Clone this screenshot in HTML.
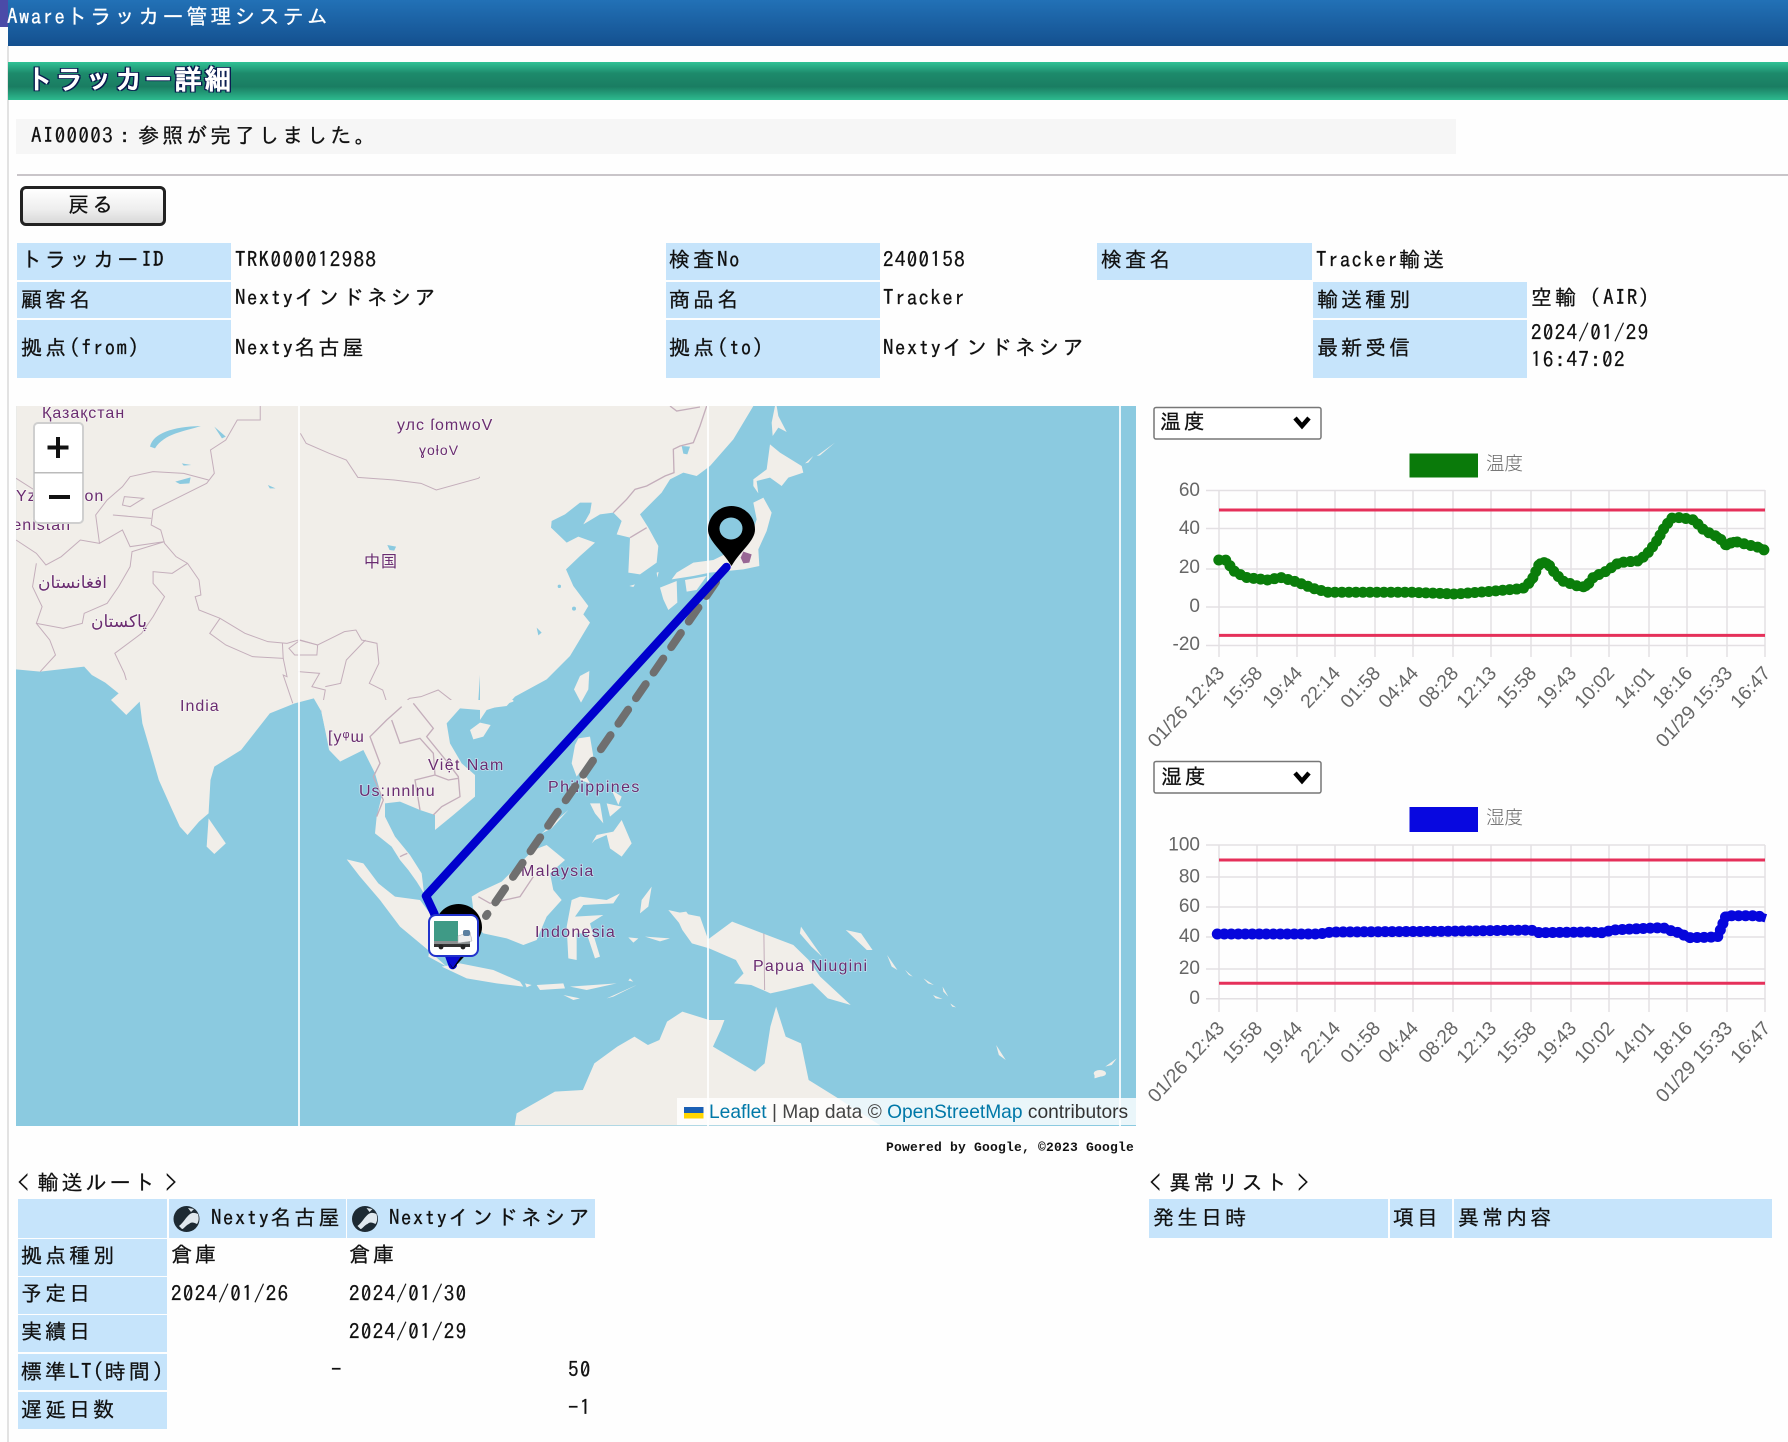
<!DOCTYPE html>
<html lang="ja"><head><meta charset="utf-8"><title>トラッカー詳細</title>
<style>
html,body{margin:0;padding:0;background:#fefefe}
#p{position:relative;width:1788px;height:1442px;overflow:hidden;background:#fefefe;font-family:"IPAGothic","Noto Sans CJK JP",monospace;color:#111}
#p>div{position:absolute}
.t{font-size:21px;letter-spacing:3.05px;line-height:24px;height:24px;white-space:nowrap;-webkit-text-stroke:.25px currentColor}
.t i{font-style:normal;letter-spacing:1.35px}
.t b{font-weight:normal;letter-spacing:9px}
.b{background:#c6e4fb}
svg{position:absolute;left:0;top:0}
svg text{font-family:"Liberation Sans",sans-serif}
.ml text{paint-order:stroke;stroke:#fff;stroke-opacity:.45;stroke-width:1.5px}
</style></head><body><div id="p">
<div style="left:7px;top:46px;width:2px;height:1396px;background:#e2e2e2"></div>
<div style="left:8px;top:0;width:1780px;height:46px;background:linear-gradient(#2271b6,#14508f)"></div>
<div style="left:0;top:0;width:8px;height:27px;background:#4b4ba8"></div>
<div class="t" style="left:7px;top:5px;color:#fff"><i>Aware</i>トラッカー管理システム</div>
<div style="left:8px;top:62px;width:1780px;height:38px;background:linear-gradient(#30c296,#1d8a6b 30%,#1a7d62 65%,#2dba8f)"></div>
<div class="t" style="left:26px;top:65px;height:30px;line-height:30px;font-size:27px;letter-spacing:2.7px;color:#fff;font-weight:bold;text-shadow:-1.5px -1px 0 #0a1c50,1.5px -1px 0 #0a1c50,-1.5px 1px 0 #0a1c50,1.5px 1px 0 #0a1c50">トラッカー詳細</div>
<div style="left:16px;top:119px;width:1440px;height:35px;background:#f6f6f6"></div>
<div class="t" style="left:31px;top:124px"><i>AI00003</i>：参照が完了しました。</div>
<div style="left:17px;top:174px;width:1771px;height:2px;background:#c9c5c9"></div>
<div style="left:20px;top:186px;width:140px;height:34px;border:3px solid #222;border-radius:6px;background:linear-gradient(#fff,#eee 60%,#d8d8d8)"></div>
<div class="t" style="left:68px;top:193px">戻る</div>

<div class="b" style="left:17px;top:243px;width:214px;height:37px"></div>
<div class="b" style="left:17px;top:282px;width:214px;height:36px"></div>
<div class="b" style="left:17px;top:320px;width:214px;height:58px"></div>
<div class="b" style="left:666px;top:243px;width:214px;height:37px"></div>
<div class="b" style="left:666px;top:282px;width:214px;height:36px"></div>
<div class="b" style="left:666px;top:320px;width:214px;height:58px"></div>
<div class="b" style="left:1097px;top:243px;width:215px;height:37px"></div>
<div class="b" style="left:1313px;top:282px;width:214px;height:36px"></div>
<div class="b" style="left:1313px;top:320px;width:214px;height:58px"></div>

<div class="t" style="left:21px;top:248px">トラッカー<i>ID</i></div>
<div class="t" style="left:235px;top:248px"><i>TRK000012988</i></div>
<div class="t" style="left:669px;top:248px">検査<i>No</i></div>
<div class="t" style="left:883px;top:248px"><i>2400158</i></div>
<div class="t" style="left:1101px;top:248px">検査名</div>
<div class="t" style="left:1316px;top:248px"><i>Tracker</i>輸送</div>
<div class="t" style="left:21px;top:288px">顧客名</div>
<div class="t" style="left:235px;top:286px"><i>Nexty</i>インドネシア</div>
<div class="t" style="left:669px;top:288px">商品名</div>
<div class="t" style="left:883px;top:286px"><i>Tracker</i></div>
<div class="t" style="left:1317px;top:288px">輸送種別</div>
<div class="t" style="left:1531px;top:286px">空輸（<i>AIR</i>）</div>
<div class="t" style="left:21px;top:336px">拠点<i>(from)</i></div>
<div class="t" style="left:235px;top:336px"><i>Nexty</i>名古屋</div>
<div class="t" style="left:669px;top:336px">拠点<i>(to)</i></div>
<div class="t" style="left:883px;top:336px"><i>Nexty</i>インドネシア</div>
<div class="t" style="left:1317px;top:336px">最新受信</div>
<div class="t" style="left:1531px;top:321px"><i>2024/01/29</i></div>
<div class="t" style="left:1531px;top:348px"><i>16:47:02</i></div>

<svg width="1788" height="1442" viewBox="0 0 1788 1442">
<defs><clipPath id="mc"><rect x="16" y="406" width="1120" height="720"/></clipPath></defs>
<g clip-path="url(#mc)">
<rect x="16" y="406" width="1120" height="720" fill="#8bcae0"/>
<g transform="translate(0,400) scale(.3827,.33333)">
<g fill="#f1eee9">
<path d="M42 18L42 808 105 815 220 800 240 825 275 848 310 880 290 900 330 945 365 905 372 970 395 1060 415 1140 450 1230 470 1280 490 1305 520 1265 545 1240 550 1140 560 1100 630 1050 705 940 770 910 820 895 840 935 860 1050 885 1080 950 1000 1250 900 1300 18Z"/>
<path d="M545 1255L590 1330 560 1362 540 1340Z"/>
<path d="M1763 1540L1793 1535 1848 1620 1913 1565 1993 1600 2073 1635 2113 1680 2143 1730 2223 1815 2163 1795 2123 1750 2053 1770 2013 1780 1963 1755 1918 1750 1943 1720 1923 1680 1853 1645 1808 1630 1783 1590Z"/>
<path d="M2210 1590L2250 1600 2280 1650 2265 1650ZM2318 1665L2345 1710 2330 1700ZM2365 1710L2385 1730 2375 1725ZM2413 1735L2440 1755 2425 1750ZM2463 1760L2478 1790 2465 1775ZM2438 1785L2463 1797 2445 1795ZM2483 1810L2498 1822 2488 1820ZM2603 1935L2628 1980 2610 1965ZM2860 2020L2875 2030 2860 2035ZM2888 2000L2918 1975 2905 1995Z"/>
<path d="M1345 2176L1350 2140 1450 2075 1523 2070 1553 1990 1613 1940 1658 1910 1693 1935 1723 1920 1743 1865 1783 1835 1853 1860 1893 1860 1883 1890 1863 1940 1973 2015 1998 1990 2013 1880 2028 1820 2053 1910 2093 1930 2113 2040 2183 2090 2300 2176Z"/>
<ellipse cx="2874" cy="2020" rx="16" ry="10"/>
<path d="M2093 1580L2148 1670 2120 1640 2090 1600Z"/>
</g>
<g fill="#8bcae0">
<path d="M392 140C400 100 450 80 525 78C480 95 430 100 405 145Z"/>
<path d="M458 245L498 232 495 250 470 252Z"/>
<path d="M1012 435L1035 440 1030 452 1018 450Z"/>
<path d="M560 80L590 110 580 115ZM475 190L500 195 480 197ZM700 255L720 265 705 265ZM1785 135L1805 135 1795 165Z"/>
</g>
<g fill="none" stroke="#c4aebb">
<path vector-effect="non-scaling-stroke" d="M785 100L800 130 860 160 905 180 935 232 1030 240 1100 250 1140 270 1250 235 1295 190 1300 150 1370 125 1430 80 1490 70 1450 30 1390 35 1390 18"/>
<path vector-effect="non-scaling-stroke" d="M680 18L680 60 620 60 590 120 550 150 560 220 540 250 470 290 400 330 395 375 420 390 430 430 460 470 490 490 520 540 525 585 510 590 520 630 575 655 640 700 700 725 750 730 780 720 830 735 900 695 930 690 945 720 985 730 990 790 965 850 1000 870 1010 905 1040 925 1070 895 1100 890 1145 870 1190 910"/>
<path vector-effect="non-scaling-stroke" d="M42 235L90 270M400 215L340 230 320 260 280 300 250 345 260 430 210 420 160 470 120 495 95 460 42 420M400 215L480 220 545 240M295 345L395 355M325 290L375 295 340 320 320 315Z"/>
<path vector-effect="non-scaling-stroke" d="M260 430L320 390 340 440 430 425 345 455 340 500 310 560 280 610 220 640 215 670 165 685 95 670 110 620 85 560 95 490M95 670L130 720 145 765 105 815"/>
<path vector-effect="non-scaling-stroke" d="M490 490L450 520 400 515 400 550 430 590 400 650 370 700 300 760 325 820 330 840"/>
<path vector-effect="non-scaling-stroke" d="M575 655L548 700 590 735 660 770 740 775 738 730M755 745L785 720 830 735 828 765 770 765Z"/>
<path vector-effect="non-scaling-stroke" d="M740 775L750 830 740 825 765 910M780 815L835 820 815 860 850 870 840 935M955 720L905 780 890 850 850 860"/>
<path vector-effect="non-scaling-stroke" d="M1996 1600L1998 1770"/>
</g>
</g>
<!-- east asia, true 3x crop coords -->
<g transform="translate(480,406) scale(.33333)">
<g fill="#f1eee9">
<path d="M0 0L0 910 80 900 105 872 200 820 270 750 330 650 310 625 325 600 280 540 258 490 300 450 345 410 295 392 260 410 213 365 215 345 255 325 300 290 335 290 330 320 310 355 360 325 400 320 425 345 410 385 450 395 445 500 480 505 530 470 535 420 505 365 480 325 545 260 570 220 610 200 650 210 690 180 760 100 820 0Z"/>
<path d="M300 810L328 795 325 850 303 890 282 850Z"/>
<path d="M820 290L850 275 875 320 860 375 835 430 838 480 790 490 740 495 690 500 640 510 575 520 590 500 640 470 700 462 745 440 810 400 830 340Z"/>
<path d="M615 522L680 510 650 552 620 557Z"/>
<path d="M540 545L590 525 592 590 565 612 550 580Z"/>
<path d="M870 115L900 140 965 180 970 200 925 215 905 240 870 215 830 225 835 262 820 240 820 220 860 190Z"/>
<path d="M885 0L875 50 878 90 895 65 920 78 895 30 890 0Z"/>
<path d="M975 172L1000 150 985 170ZM1010 150L1065 110 1020 148Z"/>
<path d="M448 540L465 535 460 543ZM530 500L536 498 532 515Z"/>
</g>
<g fill="#8bcae0">
<path d="M605 120L630 122 622 145 610 143Z"/>
<circle cx="238" cy="541" r="5"/><circle cx="282" cy="608" r="6"/><path d="M170 665L185 680 175 688Z"/>
</g>
<g fill="none" stroke="#c4aebb" stroke-width="4">
<path d="M680 0L660 60 640 110 600 120 580 130 582 200 555 210 500 240 465 250 440 280 400 320M450 395L500 365M570 0L590 15 660 3"/>
</g>
<path d="M790 437L815 445 808 470 790 472 782 455Z" fill="#7a3a78" opacity=".75"/>
</g>
<!-- southeast asia, true 3x crop coords -->
<g transform="translate(320,700) scale(.33333)">
<g fill="#f1eee9">
<path d="M0 0L5 40 25 130 60 185 130 150 165 220 185 290 170 350 165 400 215 440 240 480 265 510 290 545 312 580 305 520 270 465 225 410 195 350 195 310 240 305 300 330 345 345 345 390 400 345 465 290 465 225 425 190 390 130 380 70 420 25 480 30 480 60 500 30 580 5 580 0Z"/>
<path d="M450 90L480 68 512 75 490 110 460 118Z"/>
<path d="M775 115L810 110 820 170 800 190 770 230 755 190 765 135ZM790 215L810 250 780 240Z"/>
<path d="M815 430L830 405 880 395 905 360 935 430 905 470 870 445 860 405 825 420Z"/>
<path d="M810 310L840 310 850 370 825 340ZM860 310L905 320 870 350ZM875 270L905 290 895 315Z"/>
<path d="M665 400L745 330 695 385Z"/>
<path d="M80 478L130 490 175 550 225 590 300 600 345 660 325 770 380 800 330 755 240 680 180 600 120 530Z"/>
<path d="M365 800L420 790 520 810 600 845 610 860 530 850 440 835Z"/>
<path d="M615 850L635 855 620 862ZM650 855L730 850 735 865 660 870ZM750 860L890 850 800 870ZM930 835L940 845 925 842ZM860 895L950 855 880 890ZM730 885L780 895 760 900Z"/>
<path d="M455 590L480 575 545 545 590 500 640 450 680 435 735 480 690 520 700 570 725 600 680 650 650 720 610 735 560 715 490 700 470 680 460 630Z"/>
<path d="M755 600L780 590 860 600 900 580 880 610 790 615 765 650 850 645 810 670 840 770 825 775 800 700 770 700 770 780 745 775 740 680Z"/>
<path d="M965 600L995 560 985 620 960 640Z"/>
<path d="M925 712L955 715 940 728ZM975 710L1050 715 1020 724Z"/>
<path d="M1045 630L1090 640 1140 650 1165 720 1180 740 1120 700 1095 690Z"/>
</g>
<g fill="none" stroke="#c4aebb" stroke-width="4">
<path d="M245 20L200 60 150 110 180 190 160 230 190 300 170 350M280 10L340 85 320 110 385 190 415 230 420 290 365 320 340 345M215 60L240 130 300 115 340 160 345 225 385 240 415 235M345 225L285 240 300 330M240 470L250 465 262 460M475 590L510 610 600 590 640 530"/>
</g>
</g>
<g fill="#fff" opacity=".85"><rect x="298" y="406" width="2" height="720"/><rect x="707" y="406" width="2" height="720"/><rect x="1119" y="406" width="2" height="720"/></g>
<g class="ml" fill="#6a2c70" font-size="16" letter-spacing="1">
<text x="42" y="418">Қазақстан</text>
<text x="16" y="501">Yzbekiston</text>
<text x="71" y="530" text-anchor="end">Türkmenistan</text>
<text x="38" y="588" font-size="17">افغانستان</text>
<text x="91" y="627" font-size="17">پاکستان</text>
<text x="397" y="430">улс ſomwoV</text>
<text x="419" y="455" font-size="14">ɣoƚoV</text>
<text x="364" y="567" font-size="16" style="font-family:'Noto Sans CJK SC',sans-serif">中国</text>
<text x="180" y="711">India</text>
<text x="328" y="742">[yᵠɯ</text>
<text x="428" y="770" letter-spacing="1.4">Việt Nam</text>
<text x="359" y="796">Us:ınnlnu</text>
<text x="548" y="792" letter-spacing="1.4">Philippines</text>
<text x="521" y="876" letter-spacing="1.3">Malaysia</text>
<text x="535" y="937" letter-spacing="1.3">Indonesia</text>
<text x="753" y="971" letter-spacing="1.2">Papua Niugini</text>
</g>
<path d="M716 582L486 916" fill="none" stroke="#6f6f6f" stroke-width="8" stroke-linecap="round" stroke-dasharray="17 14"/>
<path d="M726.500 567L426 896 434 913 452.700 965" fill="none" stroke="#0000cd" stroke-width="8.500" stroke-linejoin="round" stroke-linecap="round"/>
<path fill-rule="evenodd" d="M731.500 566C722 550 708 541 708 529.500A23.500 23.500 0 1 1 755 529.500C755 541 741 550 731.500 566ZM731 517.500A11.500 11 0 1 0 731 539.500A11.500 11 0 1 0 731 517.500Z" fill="#000"/>
<path d="M453 969C445 955 435 940 435 927.500A23.500 23.500 0 1 1 482 927.500C482 940 465 955 453 969Z" fill="#000"/>
<path d="M444 955L453 968 462 955Z" fill="#0a0ad0"/>
<rect x="429" y="915" width="49" height="41" rx="7" fill="#fff" stroke="#2233cc" stroke-width="2"/>
<rect x="434" y="921" width="24" height="20" fill="#3f9a86"/>
<rect x="434" y="941" width="36" height="4" fill="#8a8f90"/>
<path d="M458 936L470 932 472 941 458 943Z" fill="#eee" stroke="#aaa" stroke-width=".5"/>
<rect x="463" y="930" width="7" height="6" rx="2" fill="#5a7fa0"/>
<rect x="434" y="944" width="36" height="3" fill="#333"/>
<circle cx="441" cy="947" r="2.400" fill="#222"/><circle cx="463" cy="947" r="2.400" fill="#222"/>
<rect x="677" y="1098" width="459" height="27" fill="#fff" fill-opacity=".82"/>
<rect x="684" y="1107" width="19.500" height="6" fill="#1a5fb4"/><rect x="684" y="1113" width="19.500" height="5.500" fill="#ffd500"/>
<text x="709" y="1118" font-size="19.200"><tspan fill="#0078a8">Leaflet</tspan><tspan fill="#444"> | Map data © </tspan><tspan fill="#0078a8">OpenStreetMap</tspan><tspan fill="#333"> contributors</tspan></text>
<rect x="34" y="423" width="49" height="100" rx="4" fill="#fff" stroke="#cfcfcf" stroke-width="2"/>
<rect x="34" y="472" width="49" height="1.500" fill="#bbb"/>
<path d="M47.500 447.500H68.500M58 437V458" stroke="#111" stroke-width="4"/>
<path d="M49 497H70" stroke="#111" stroke-width="4"/>
</g>

<!-- chart 1 -->
<rect x="1154" y="407.500" width="167" height="31.500" rx="2" fill="#fff" stroke="#777" stroke-width="1.500"/>
<path d="M1295 418L1302 426 1309 418" fill="none" stroke="#000" stroke-width="4.500"/>
<rect x="1409.500" y="453.500" width="68.500" height="24" fill="#0a7a0a"/>
<g stroke="#e3e0e3" stroke-width="1.500" fill="none">
<path d="M1206 490.500H1765M1206 528.500H1765M1206 569H1765M1206 607H1765M1206 645.500H1765"/>
<path d="M1219 490V657M1257 490V657M1297 490V657M1335 490V657M1375 490V657M1413 490V657M1453 490V657M1491 490V657M1531 490V657M1571 490V657M1609 490V657M1649 490V657M1687 490V657M1727 490V657M1765 490V657"/>
</g>
<path d="M1219 510H1765M1219 635.400H1765" stroke="#e5305a" stroke-width="3"/>
<polyline fill="none" stroke="#0a7d0a" stroke-width="8.500" stroke-linejoin="round" points="1218.800,560 1225.600,560 1234,571 1245.400,577.400 1268,580 1280.600,577.400 1296.400,581.800 1313.400,588.500 1327.600,592.200 1409.700,592.200 1455,594 1489,591.500 1523,588.500 1531.400,581 1540,562.600 1547.300,562.600 1554,571.900 1562.600,581 1579.600,586.700 1586.400,586.700 1593.700,576.700 1605,571.900 1619,562.600 1639,560.800 1647.500,553.400 1656,542.300 1663.400,529.300 1671.300,518.200 1680.400,517.500 1694,520 1703,529.300 1712.700,534.900 1718.300,536.700 1726.800,546 1733.600,541.100 1749.500,545.200 1760.800,547.800 1766.400,551.500"/>
<polyline fill="none" stroke="#0a7d0a" stroke-width="11" stroke-linecap="round" stroke-dasharray="0 7" points="1218.800,560 1225.600,560 1234,571 1245.400,577.400 1268,580 1280.600,577.400 1296.400,581.800 1313.400,588.500 1327.600,592.200 1409.700,592.200 1455,594 1489,591.500 1523,588.500 1531.400,581 1540,562.600 1547.300,562.600 1554,571.900 1562.600,581 1579.600,586.700 1586.400,586.700 1593.700,576.700 1605,571.900 1619,562.600 1639,560.800 1647.500,553.400 1656,542.300 1663.400,529.300 1671.300,518.200 1680.400,517.500 1694,520 1703,529.300 1712.700,534.900 1718.300,536.700 1726.800,546 1733.600,541.100 1749.500,545.200 1760.800,547.800 1766.400,551.500"/>
<g fill="#666" font-size="19" text-anchor="end">
<text x="1200" y="496">60</text><text x="1200" y="534">40</text><text x="1200" y="573">20</text><text x="1200" y="612">0</text><text x="1200" y="650">-20</text>
</g>
<g fill="#666" font-size="19.300" text-anchor="end">
<text transform="translate(1225.500,674) rotate(-47)">01/26 12:43</text>
<text transform="translate(1263.500,674) rotate(-47)">15:58</text>
<text transform="translate(1303.500,674) rotate(-47)">19:44</text>
<text transform="translate(1341.500,674) rotate(-47)">22:14</text>
<text transform="translate(1381.500,674) rotate(-47)">01:58</text>
<text transform="translate(1419.500,674) rotate(-47)">04:44</text>
<text transform="translate(1459.500,674) rotate(-47)">08:28</text>
<text transform="translate(1497.500,674) rotate(-47)">12:13</text>
<text transform="translate(1537.500,674) rotate(-47)">15:58</text>
<text transform="translate(1577.500,674) rotate(-47)">19:43</text>
<text transform="translate(1615.500,674) rotate(-47)">10:02</text>
<text transform="translate(1655.500,674) rotate(-47)">14:01</text>
<text transform="translate(1693.500,674) rotate(-47)">18:16</text>
<text transform="translate(1733.500,674) rotate(-47)">01/29 15:33</text>
<text transform="translate(1771.500,674) rotate(-47)">16:47</text>
</g>
<text x="1486" y="470" font-size="18.500" fill="#666" style="font-family:'Noto Sans CJK JP',sans-serif;font-weight:300">温度</text>

<!-- chart 2 -->
<rect x="1154" y="761.500" width="167" height="31.500" rx="2" fill="#fff" stroke="#777" stroke-width="1.500"/>
<path d="M1295 773L1302 781 1309 773" fill="none" stroke="#000" stroke-width="4.500"/>
<rect x="1409.500" y="807" width="68.500" height="25" fill="#0808e0"/>
<g stroke="#e3e0e3" stroke-width="1.500" fill="none">
<path d="M1206 845H1765M1206 877H1765M1206 907H1765M1206 937H1765M1206 969H1765M1206 998.700H1765"/>
<path d="M1219 845V1012M1257 845V1012M1297 845V1012M1335 845V1012M1375 845V1012M1413 845V1012M1453 845V1012M1491 845V1012M1531 845V1012M1571 845V1012M1609 845V1012M1649 845V1012M1687 845V1012M1727 845V1012M1765 845V1012"/>
</g>
<path d="M1219 860H1765M1219 983.300H1765" stroke="#e5305a" stroke-width="3"/>
<polyline fill="none" stroke="#0606dc" stroke-width="8.500" stroke-linejoin="round" points="1217.300,934 1318.900,934 1331.500,932 1444.800,931.300 1530.800,930 1539.200,932.700 1587.500,932 1602,932.700 1612.700,930 1646.200,928.300 1663,927.700 1673.500,931.700 1679.800,932.700 1688.200,937.700 1717.600,937 1726,915.700 1757.400,915.700 1765.800,918.300"/>
<polyline fill="none" stroke="#0606dc" stroke-width="11" stroke-linecap="round" stroke-dasharray="0 7" points="1217.300,934 1318.900,934 1331.500,932 1444.800,931.300 1530.800,930 1539.200,932.700 1587.500,932 1602,932.700 1612.700,930 1646.200,928.300 1663,927.700 1673.500,931.700 1679.800,932.700 1688.200,937.700 1717.600,937 1726,915.700 1757.400,915.700 1765.800,918.300"/>
<g fill="#666" font-size="19" text-anchor="end">
<text x="1200" y="850.500">100</text><text x="1200" y="882.500">80</text><text x="1200" y="912">60</text><text x="1200" y="942">40</text><text x="1200" y="974">20</text><text x="1200" y="1004">0</text>
</g>
<g fill="#666" font-size="19.300" text-anchor="end">
<text transform="translate(1225.500,1029) rotate(-47)">01/26 12:43</text>
<text transform="translate(1263.500,1029) rotate(-47)">15:58</text>
<text transform="translate(1303.500,1029) rotate(-47)">19:44</text>
<text transform="translate(1341.500,1029) rotate(-47)">22:14</text>
<text transform="translate(1381.500,1029) rotate(-47)">01:58</text>
<text transform="translate(1419.500,1029) rotate(-47)">04:44</text>
<text transform="translate(1459.500,1029) rotate(-47)">08:28</text>
<text transform="translate(1497.500,1029) rotate(-47)">12:13</text>
<text transform="translate(1537.500,1029) rotate(-47)">15:58</text>
<text transform="translate(1577.500,1029) rotate(-47)">19:43</text>
<text transform="translate(1615.500,1029) rotate(-47)">10:02</text>
<text transform="translate(1655.500,1029) rotate(-47)">14:01</text>
<text transform="translate(1693.500,1029) rotate(-47)">18:16</text>
<text transform="translate(1733.500,1029) rotate(-47)">01/29 15:33</text>
<text transform="translate(1771.500,1029) rotate(-47)">16:47</text>
</g>
<text x="1486" y="824" font-size="18.500" fill="#666" style="font-family:'Noto Sans CJK JP',sans-serif;font-weight:300">湿度</text>
</svg>

<div class="t" style="left:1160px;top:410px">温度</div>
<div class="t" style="left:1161px;top:765px">湿度</div>
<div style="left:880px;top:1140px;width:254px;text-align:right;font:bold 13px/16px 'Liberation Mono',monospace;letter-spacing:.2px;white-space:nowrap;color:#111">Powered by Google, ©2023 Google</div>

<!-- route -->
<div class="t" style="left:18px;top:1171px"><b>&lt;</b>輸送ルート<b style="margin-left:8px">&gt;</b></div>
<div class="b" style="left:18px;top:1199px;width:149px;height:39px"></div>
<div class="b" style="left:169px;top:1199px;width:177px;height:39px"></div>
<div class="b" style="left:347px;top:1199px;width:248px;height:39px"></div>
<div class="b" style="left:18px;top:1239px;width:149px;height:37px"></div>
<div class="b" style="left:18px;top:1277px;width:149px;height:37px"></div>
<div class="b" style="left:18px;top:1315px;width:149px;height:37px"></div>
<div class="b" style="left:18px;top:1354px;width:149px;height:36px"></div>
<div class="b" style="left:18px;top:1392px;width:149px;height:37px"></div>
<svg width="1788" height="1442" viewBox="0 0 1788 1442">
<g><circle cx="186.500" cy="1219" r="13" fill="#1d2a33"/><path d="M179 1226C184 1222 186 1217 190 1214C193 1212 196 1213 198 1214C199 1218 199 1221 197 1224C193 1222 191 1222 189 1224C186 1225 184 1229 182 1229ZM188 1208L194 1209 191 1212Z" fill="#dfe8ee"/></g>
<g transform="translate(178.500,0)"><circle cx="186.500" cy="1219" r="13" fill="#1d2a33"/><path d="M179 1226C184 1222 186 1217 190 1214C193 1212 196 1213 198 1214C199 1218 199 1221 197 1224C193 1222 191 1222 189 1224C186 1225 184 1229 182 1229ZM188 1208L194 1209 191 1212Z" fill="#dfe8ee"/></g>
</svg>
<div class="t" style="left:211px;top:1206px"><i>Nexty</i>名古屋</div>
<div class="t" style="left:389px;top:1206px"><i>Nexty</i>インドネシア</div>
<div class="t" style="left:21px;top:1244px">拠点種別</div>
<div class="t" style="left:171px;top:1243px">倉庫</div>
<div class="t" style="left:349px;top:1243px">倉庫</div>
<div class="t" style="left:21px;top:1282px">予定日</div>
<div class="t" style="left:171px;top:1282px"><i>2024/01/26</i></div>
<div class="t" style="left:349px;top:1282px"><i>2024/01/30</i></div>
<div class="t" style="left:21px;top:1320px">実績日</div>
<div class="t" style="left:349px;top:1320px"><i>2024/01/29</i></div>
<div class="t" style="left:21px;top:1360px">標準<i>LT(</i>時間<i>)</i></div>
<div class="t" style="left:331px;top:1358px"><i>-</i></div>
<div class="t" style="left:568px;top:1358px"><i>50</i></div>
<div class="t" style="left:568px;top:1396px"><i>-1</i></div>
<div class="t" style="left:21px;top:1398px">遅延日数</div>

<!-- anomaly -->
<div class="t" style="left:1150px;top:1171px"><b>&lt;</b>異常リスト<b style="margin-left:8px">&gt;</b></div>
<div class="b" style="left:1149px;top:1199px;width:239px;height:39px"></div>
<div class="b" style="left:1390px;top:1199px;width:62px;height:39px"></div>
<div class="b" style="left:1454px;top:1199px;width:318px;height:39px"></div>
<div class="t" style="left:1153px;top:1206px">発生日時</div>
<div class="t" style="left:1393px;top:1206px">項目</div>
<div class="t" style="left:1458px;top:1206px">異常内容</div>
</div></body></html>
